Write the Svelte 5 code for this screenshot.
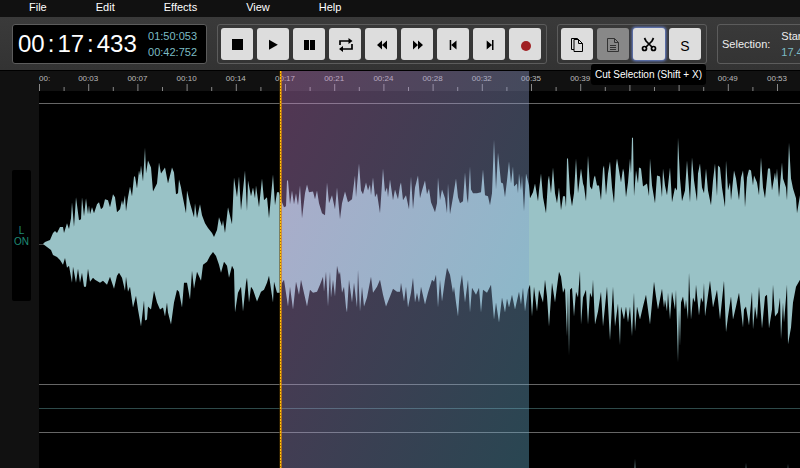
<script lang="ts">
  const menus = ['File', 'Edit', 'Effects', 'View', 'Help'];

  const transport = [
    { id: 'stop', label: 'Stop' },
    { id: 'play', label: 'Play' },
    { id: 'pause', label: 'Pause' },
    { id: 'loop', label: 'Loop' },
    { id: 'rewind', label: 'Rewind' },
    { id: 'forward', label: 'Fast forward' },
    { id: 'first', label: 'Seek to start' },
    { id: 'last', label: 'Seek to end' },
    { id: 'record', label: 'Record' }
  ];

  const labels = [
    '00:', '00:03', '00:07', '00:10', '00:14', '00:17', '00:21', '00:24',
    '00:28', '00:32', '00:35', '00:39', '00:42', '00:46', '00:49', '00:53'
  ];

  // visible range of the timeline, in wave units
  const from = 39;
  const span = 761;
  const step = 49.2;
  const pct = (v: number) => (v / span) * 100 + '%';

  const selection = { start: 281, end: 529 };

  // x,level pairs: peaks above and below the centre line
  const upper = `39,0 43,0 45,2 50,4 53,11 55,13 57,11 60,17 63,17 64,11 67,21 69,15 71,26 72,42 74,17 76,47 79,24 81,25
    82,47 84,28 86,46 88,30 89,39 90,30 92,37 94,31 97,40 99,42 101,35 103,37 105,45 108,44 110,37 113,50 115,47
    117,32 120,35 122,44 123,39 125,49 126,33 128,47 130,58 132,48 134,68 135,68 137,56 139,74 140,69 141,79 143,63
    145,97 146,71 148,84 151,77 153,53 157,61 159,82 161,71 165,77 168,61 172,77 174,72 176,50 178,51 179,65 181,57
    182,51 186,31 187,54 190,41 194,27 195,41 197,26 200,40 202,29 205,21 208,16 212,11 214,7 217,14 219,27 222,18
    223,24 225,11 228,37 232,20 234,67 237,47 239,68 241,34 245,74 247,33 248,64 251,48 253,57 255,46 256,59 259,37
    262,66 264,44 267,47 269,26 273,70 275,39 277,52 279,52 282,42 284,37 286,38 287,64 288,64 290,40 292,54 294,40
    296,51 298,39 300,59 302,26 305,51 307,60 309,52 313,53 315,45 317,54 319,41 322,31 325,29 327,62 329,41 332,49
    335,35 337,57 340,25 342,41 345,53 348,42 352,45 355,69 356,47 359,81 361,54 363,50 366,62 368,54 370,60 371,49
    373,67 375,47 377,51 380,31 383,76 385,52 387,57 388,47 390,65 393,44 395,55 398,45 400,59 401,62 403,44 406,49
    409,35 411,68 413,35 415,57 418,69 420,46 422,54 425,64 427,50 429,56 431,42 435,32 437,41 438,67 440,44 442,55
    445,46 447,31 448,61 450,30 453,47 456,66 458,47 460,41 463,43 465,72 467,46 468,41 470,78 471,55 473,51 477,51
    481,52 483,75 485,49 488,48 490,39 492,51 494,105 496,55 498,92 501,62 503,61 505,47 507,64 509,83 511,61 513,78
    514,58 517,61 518,51 519,71 521,54 522,69 524,33 526,71 529,59 530,46 533,52 535,61 538,43 539,54 541,71 543,47
    546,31 548,64 549,69 551,51 553,77 555,51 557,41 559,57 561,34 563,48 565,48 566,37 567,86 568,86 570,51 572,38
    574,51 576,86 578,51 581,76 583,61 584,58 586,43 588,89 590,58 592,55 594,67 595,69 597,59 599,59 601,44 603,76
    604,79 606,49 608,71 610,83 612,57 614,41 616,79 617,86 619,74 621,62 623,76 624,72 626,47 628,62 630,86 631,71
    632,107 633,107 634,48 636,74 638,61 639,77 641,76 643,58 647,61 649,48 650,86 652,59 655,41 657,69 660,68 662,47
    663,76 665,59 667,49 670,77 672,42 675,57 677,54 678,107 680,66 682,43 685,54 687,84 690,42 692,87 694,64 697,43
    698,71 700,81 702,57 704,51 706,76 708,54 711,39 713,64 715,81 717,48 718,79 720,77 722,57 725,37 726,84 728,54
    730,62 731,44 734,74 736,66 739,44 741,67 743,74 744,62 745,37 747,67 749,75 751,74 753,59 754,69 757,62 759,49
    761,87 763,57 765,46 768,76 770,76 772,54 775,72 776,64 777,76 779,47 782,82 783,66 786,57 787,44 789,102 791,66
    793,56 796,46 797,31 800,49`;

  const lower = `39,0 43,0 47,3 51,6 53,11 57,13 60,16 63,21 65,14 67,24 69,22 72,39 73,23 76,39 78,25 80,39 82,29 84,43
    86,43 88,25 90,38 93,34 95,36 100,39 103,37 107,41 110,33 112,39 114,45 117,32 119,29 122,34 125,47 126,33
    128,48 130,43 133,64 136,52 138,66 141,83 144,57 145,77 147,76 148,63 151,66 154,47 157,59 160,66 163,64 165,73
    167,59 168,69 171,81 174,59 177,46 179,48 182,64 184,39 187,39 190,56 192,27 194,45 197,28 201,37 203,21 207,18
    210,12 213,8 216,12 219,21 221,29 224,18 227,22 229,34 232,22 234,26 235,69 238,49 241,43 243,68 246,39 247,34
    249,59 251,43 253,46 257,58 261,48 264,46 267,39 269,32 273,59 274,38 277,49 280,49 282,39 284,36 288,63 290,43
    293,66 296,38 299,51 301,36 305,54 307,63 310,46 313,49 317,48 320,41 323,33 324,48 326,28 328,63 330,28 331,54
    333,36 335,53 337,22 339,31 340,28 342,49 344,43 346,64 347,69 349,36 352,59 354,39 357,64 358,26 360,68 362,43
    364,63 367,54 371,33 373,49 377,43 380,36 383,51 386,63 390,53 393,45 397,48 400,48 401,39 404,58 406,43 408,64
    411,49 413,34 415,59 417,49 419,59 421,43 425,61 428,49 432,36 434,38 436,31 438,64 440,36 442,58 445,36 447,24
    450,31 453,49 454,43 456,59 458,73 460,43 462,31 465,59 468,36 470,69 472,44 476,51 479,44 481,69 483,46 487,49
    491,41 494,76 496,59 499,79 502,54 505,69 507,55 509,64 512,51 515,66 519,48 521,61 523,44 525,68 528,46 530,41
    532,73 534,43 537,68 539,46 543,59 545,36 547,53 549,83 552,39 555,59 557,43 559,28 561,33 563,49 565,44 567,93
    568,46 569,112 570,46 572,44 574,73 576,48 578,54 580,27 581,81 583,54 586,46 588,81 590,49 592,54 593,36 595,81
    598,68 601,48 603,83 607,43 610,97 613,43 615,83 618,60 620,102 621,63 624,76 626,63 628,79 630,63 632,93 634,49
    635,88 637,63 640,76 643,63 646,51 650,81 654,38 656,53 658,66 662,45 664,64 665,56 667,68 668,49 670,76 672,48
    675,66 676,46 678,119 679,66 680,103 681,59 683,53 685,66 686,56 688,76 689,29 691,76 693,54 695,59 696,41 699,72
    701,54 703,59 704,39 705,73 707,59 710,37 713,64 717,46 720,76 724,37 726,89 728,73 731,53 733,76 736,63 739,49
    743,84 744,66 746,63 749,82 752,48 753,86 755,63 757,76 759,43 762,85 765,53 767,51 769,85 772,66 773,41 775,73
    778,69 780,54 781,96 783,59 784,79 786,54 787,41 788,101 791,84 793,59 796,43 800,36`;

  const rightPeaks = `39,0 280,70 494,90 632,90 634,90 635,115 636,90 745,90 746,111 747,90 787,90 788,110 789,90 800,60`;

  function parse(text: string) {
    return text.trim().split(/\s+/).map((p) => p.split(',').map(Number));
  }

  function outline(up: string, down: string) {
    const top = parse(up).map(([x, v]) => `${x},${-v}`);
    const bottom = parse(down).reverse().map(([x, v]) => `${x},${v}`);
    return [...top, ...bottom].join(' ');
  }

  const left = outline(upper, lower);
  const right = outline(rightPeaks, rightPeaks);
</script>

{#snippet icon(id: string)}
  <svg class="icon" viewBox="0 0 16 16" aria-hidden="true">
    {#if id === 'stop'}
      <rect x="3" y="3" width="11" height="11" />
    {:else if id === 'play'}
      <path d="M4 3.8 12.8 8.8 4 13.8z" />
    {:else if id === 'pause'}
      <path d="M3 4h5v10H3zM9 4h5v10H9z" />
    {:else if id === 'loop'}
      <path class="line" d="M3 9V5h10M15 8v5H5" />
      <path d="M11.5 2 15.5 5l-4 3zM6 10 2 13l4 3z" />
    {:else if id === 'rewind'}
      <path d="M9 4.5v9L4 9zM14 4.5v9L9 9z" />
    {:else if id === 'forward'}
      <path d="M4 4.5v9L9 9zM9 4.5v9l5-4.5z" />
    {:else if id === 'first'}
      <path d="M4.7 4h1.5v10H4.7zM11.5 4.5v9L6.2 9z" />
    {:else if id === 'last'}
      <path d="M11 4h1.5v10H11zM5.7 4.5v9L11 9z" />
    {:else if id === 'record'}
      <circle class="red" cx="9" cy="10" r="5" />
    {:else if id === 'copy'}
      <path class="thin" d="M5 3.5h4.5l4 4v8H5zM9.5 3.5v4h4M5 13.5H2.5v-11h6l1 1" />
    {:else if id === 'paste'}
      <path class="thin" d="M2.5 2.5h7l4 4v9h-11zM9.5 2.5v4h4M5 9.5h6M5 11.5h6M5 13.5h6" />
    {:else if id === 'cut'}
      <path class="line" d="M3.5 2 5 5l6.5 6.5M12.5 2 11 5l-6.500 6.500" />
      <circle class="line" cx="3.500" cy="12.500" r="2" />
      <circle class="line" cx="12.500" cy="12.500" r="2" />
    {/if}
  </svg>
{/snippet}

<div class="app">
  <nav class="menu">
    {#each menus as name}
      <button>{name}</button>
    {/each}
  </nav>

  <header class="toolbar">
    <div class="time">
      <div class="clock">00<i>:</i>17<i>:</i>433</div>
      <div class="totals">
        <span>01:50:053</span>
        <span>00:42:752</span>
      </div>
    </div>

    <div class="group">
      {#each transport as b}
        <button class="tool" aria-label={b.label}>{@render icon(b.id)}</button>
      {/each}
    </div>

    <div class="group">
      <button class="tool" aria-label="Copy selection">{@render icon('copy')}</button>
      <button class="tool" aria-label="Paste" disabled>{@render icon('paste')}</button>
      <div class="anchor">
        <button class="tool active" aria-label="Cut selection" aria-describedby="cut-tip">{@render icon('cut')}</button>
        <span class="tip" id="cut-tip" role="tooltip">Cut Selection (Shift + X)</span>
      </div>
      <button class="tool letter">S</button>
    </div>

    <div class="info">
      <span>Selection:</span>
      <div class="field">
        <span>Start:</span>
        <span class="value">17.433</span>
      </div>
    </div>
  </header>

  <main class="editor">
    <aside class="channels">
      <button class="channel">L<br />ON</button>
    </aside>

    <div class="timeline">
      <svg class="ruler">
        {#each labels as label, i}
          <rect x={pct(i * step)} y="13" width="1" height="7" />
          <rect x={pct((i + 0.5) * step)} y="16" width="1" height="4" />
          <text x={pct(i * step)} y="10" text-anchor={i ? 'middle' : 'start'}>{label}</text>
        {/each}
      </svg>

      <div class="tracks">
        <svg class="track" viewBox="{from} -141 {span} 282" preserveAspectRatio="none">
          <rect class="axis" x={from} y="0" width={span} height="1" />
          <polygon points={left} />
        </svg>
        <div class="divider"></div>
        <svg class="track" viewBox="{from} -141 {span} 282" preserveAspectRatio="none">
          <polygon points={right} />
        </svg>
      </div>

      <div
        class="selection"
        style:left={pct(selection.start - from)}
        style:width={pct(selection.end - selection.start)}
      ></div>
      <div class="cursor" style:left={pct(selection.start - from)}></div>
    </div>
  </main>
</div>

<style>
  :global(body) {
    margin: 0;
    overflow: hidden;
    background: #000;
  }
  .app {
    display: flex;
    flex-direction: column;
    height: 100vh;
    overflow: hidden;
    font-family: "Liberation Sans", Arial, sans-serif;
    font-size: 11px;
    color: #eee;
  }
  button {
    margin: 0;
    border: 0;
    font-family: inherit;
  }
  .menu {
    display: flex;
    flex: none;
    height: 17px;
    padding-left: 4px;
    background: #111;
  }
  .menu button {
    padding: 0 24px 3px 25px;
    background: none;
    color: #fff;
    font-size: 11px;
    line-height: 14px;
  }
  .toolbar {
    display: flex;
    flex: none;
    gap: 10px;
    padding: 7px 0 6px 12px;
    background: linear-gradient(#3a3a3a, #333);
    border-bottom: 1px solid #000;
  }
  .time,
  .group,
  .info {
    display: flex;
    flex: none;
    align-items: center;
    box-sizing: border-box;
    height: 40px;
    border: 1px solid #5c5c5c;
    border-radius: 3px;
  }
  .time {
    justify-content: space-between;
    width: 195px;
    padding: 0 9px 0 5px;
    background: #000;
  }
  .clock {
    color: #fff;
    font-size: 24px;
    line-height: 32px;
  }
  .clock i {
    margin: 0 3px;
    font-style: normal;
  }
  .totals,
  .field {
    display: flex;
    flex-direction: column;
    line-height: 16px;
  }
  .totals,
  .value {
    color: #7cbcc4;
  }
  .group {
    gap: 4px;
    padding: 0 5px 0 3px;
  }
  .tool {
    display: flex;
    align-items: center;
    justify-content: center;
    width: 32px;
    height: 32px;
    padding: 0;
    border-radius: 3px;
    background: #ddd;
    color: #000;
  }
  .tool:disabled {
    background: #888;
    color: #333;
  }
  .tool.active {
    box-shadow: 0 0 3px 1px #6f8be0;
  }
  .letter {
    padding-top: 3px;
    font-size: 14px;
  }
  .icon {
    width: 16px;
    height: 16px;
    fill: currentColor;
  }
  .icon .line,
  .icon .thin {
    fill: none;
    stroke: currentColor;
    stroke-width: 1.7;
  }
  .icon .thin {
    stroke-width: 1;
  }
  .icon .red {
    fill: #a02023;
  }
  .anchor {
    position: relative;
  }
  .tip {
    position: absolute;
    z-index: 5;
    top: 36px;
    right: -41px;
    padding: 0 4px;
    border-radius: 3px;
    background: #000;
    color: #fff;
    font-size: 10px;
    line-height: 21px;
    white-space: nowrap;
  }
  .info {
    gap: 11px;
    padding: 0 40px 0 4px;
  }
  .editor {
    display: flex;
    flex: 1;
    min-height: 0;
  }
  .channels {
    flex: none;
    width: 39px;
    background: #111;
  }
  .channel {
    display: block;
    width: 19px;
    height: 131px;
    margin: 99px auto 0 12px;
    padding: 0;
    border-radius: 2px;
    background: #000;
    color: #1f8a76;
    font-size: 10px;
    line-height: 11px;
  }
  .timeline {
    position: relative;
    flex: 1;
    min-width: 0;
    overflow: hidden;
  }
  .ruler {
    display: block;
    width: 100%;
    height: 20px;
    background: #111;
    fill: #888;
    font-size: 8px;
  }
  .ruler text {
    fill: #bbb;
  }
  .tracks {
    padding-top: 12px;
  }
  .track {
    display: block;
    box-sizing: border-box;
    width: 100%;
    height: 282px;
    border-top: 1px solid #666;
    border-bottom: 1px solid #666;
    fill: #99c2c6;
  }
  .axis {
    fill: #444;
  }
  .divider {
    box-sizing: border-box;
    height: 47px;
    border-bottom: 23px solid #000;
    box-shadow: inset 0 -1px #2e4a4a;
  }
  .selection {
    position: absolute;
    top: 0;
    bottom: 0;
    background: linear-gradient(115deg, rgba(208, 135, 208, 0.4), rgba(102, 176, 205, 0.4));
  }
  .cursor {
    position: absolute;
    top: 0;
    bottom: 0;
    width: 1px;
    margin-left: -1px;
    background: repeating-linear-gradient(#ffc400 0 2px, #a86a00 2px 3px);
    box-shadow: 1px 0 rgba(220, 130, 20, 0.7), -1px 0 rgba(90, 60, 0, 0.5);
  }
</style>
